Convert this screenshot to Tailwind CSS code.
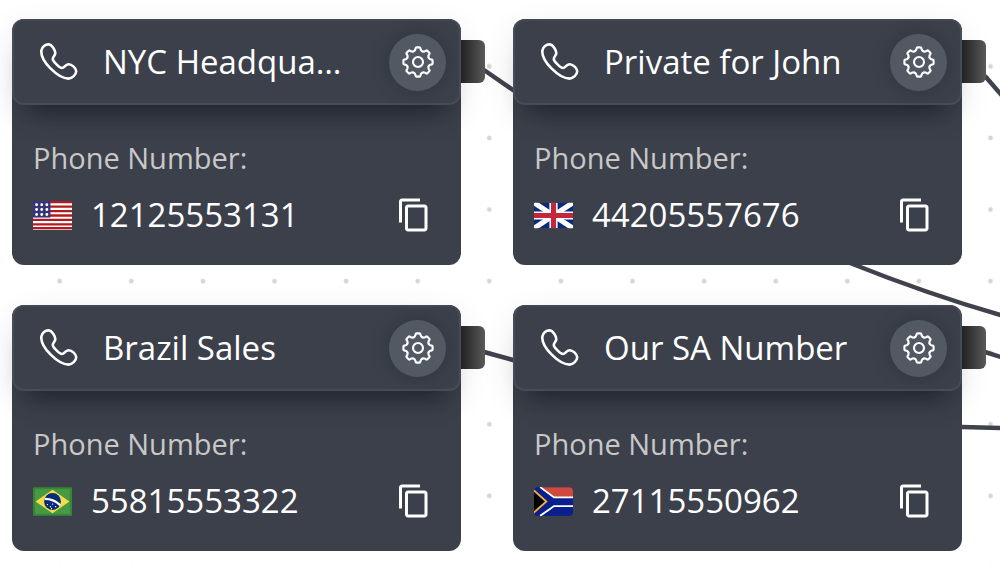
<!DOCTYPE html>
<html lang="en">
<head>
    <meta charset="UTF-8">
    <meta name="viewport" content="width=device-width, initial-scale=1.0">
    <title>Call Flow - Phone Numbers</title>
    <script src="https://cdn.jsdelivr.net/npm/@tailwindcss/browser@4"></script>
</head>
<body class="bg-white">
    <!-- Shared icons -->
    <svg class="hidden">
        <symbol id="icon-phone" viewBox="0 0 38 38">
            <path fill="none" stroke="currentColor" stroke-width="2.6" stroke-linejoin="round" d="M1.4 7.5C1.8 4 5.5 1.2 8.8 1.4C12 1.6 15.2 7 15.3 10C15.4 13 12.6 13.6 12.8 16.2C13 18.5 19.5 24.8 22 25C24.5 25 25 21.6 28.5 21.2C31.5 21 36 25 36.2 28C36.4 31.5 32 35.5 28.5 35.6C18 35.5 0 18 1.4 7.5Z" />
        </symbol>
        <symbol id="icon-gear" viewBox="-16 -16 32 32">
            <g fill="none" stroke="currentColor" stroke-width="2.1" stroke-linecap="round" stroke-linejoin="round">
                <path id="tooth" d="M-4.4 -10.6Q-3 -11.2 -2.7 -12.4L-2.4 -13.8Q-2.2 -14.6 -1.4 -14.6H1.4Q2.2 -14.6 2.4 -13.8L2.7 -12.4Q3 -11.2 4.4 -10.6" />
                <use href="#tooth" transform="rotate(45)" />
                <use href="#tooth" transform="rotate(90)" />
                <use href="#tooth" transform="rotate(135)" />
                <use href="#tooth" transform="rotate(180)" />
                <use href="#tooth" transform="rotate(225)" />
                <use href="#tooth" transform="rotate(270)" />
                <use href="#tooth" transform="rotate(315)" />
                <circle r="5" />
            </g>
        </symbol>
        <symbol id="icon-copy" viewBox="0 0 24 24">
            <path fill="currentColor" d="M16 1H4c-1.100 0-2 .9-2 2v14h2V3h12V1zm3 4H8c-1.100 0-2 .9-2 2v14c0 1.100.9 2 2 2h11c1.100 0 2-.9 2-2V7c0-1.100-.9-2-2-2zm0 16H8V7h11v14z" />
        </symbol>
    </svg>

    <main class="relative min-h-screen overflow-hidden font-['Open_Sans','Noto_Sans',sans-serif] text-white">
        <!-- Dotted canvas and wires -->
        <svg class="absolute inset-0 h-full w-full" aria-hidden="true">
            <defs>
                <pattern id="dots" x="23.9" y="30.6" width="71.6" height="71.6" patternUnits="userSpaceOnUse">
                    <circle cx="35.8" cy="35.8" r="2.400" fill="#d6d6d6" />
                </pattern>
            </defs>
            <rect width="100%" height="100%" fill="url(#dots)" />
            <g fill="none" stroke="#40434d" stroke-width="4.500">
                <path d="M484 70L513 90C620 165 740 220 850 263Q930 295 1004 316" />
                <path d="M985 76L1004 98" />
                <path d="M484 352L513 360C650 398 800 426 962 427L1004 428" />
                <path d="M985 352L1004 358" />
            </g>
        </svg>

        <!-- Number nodes -->
        <div class="relative grid grid-cols-2 gap-x-[52px] gap-y-10 pt-[19px] pr-[38px] pl-3">
            <section class="relative rounded-xl bg-[#3b404b]">
                <header class="flex h-[86px] items-center rounded-xl border-2 border-[#464c58] border-t-[#414753] bg-[#3b404b] pr-[13px] pl-[26px] shadow-[0_22px_24px_-16px_rgba(0,0,0,0.4),0_10px_36px_-4px_rgba(0,0,0,0.12)]">
                    <svg class="size-[38px] shrink-0"><use href="#icon-phone" /></svg>
                    <h2 class="mr-9 ml-[25px] flex-1 truncate text-[33px] leading-12">NYC Headquarters</h2>
                    <button type="button" aria-label="Settings" class="flex size-[57px] shrink-0 items-center justify-center rounded-full bg-[#535963] shadow-[0_0_20px_rgba(0,0,0,0.2)]">
                        <svg class="size-8"><use href="#icon-gear" /></svg>
                    </button>
                </header>
                <div class="absolute top-[21px] left-full h-[43px] w-6 rounded-r-md bg-linear-to-r from-[#222222] to-[#5a5a5a]"></div>
                <div class="relative px-[21px] pt-[33px] pb-[30px]">
                    <p class="text-[29px] leading-10 text-[#c8c8c8]">Phone Number:</p>
                    <div class="mt-[17px] flex h-10 items-center">
                        <svg class="h-[29px] w-[39px]" viewBox="0 0 38 28" role="img" aria-label="United States">
                            <rect width="38" height="28" fill="#ffffff" />
                            <path stroke="#b31b1f" stroke-width="2.200" d="M0 1H38M0 5.400H38M0 9.700H38M0 14H38M0 18.300H38M0 22.600H38M0 26.400H38" />
                            <rect width="17" height="16" fill="#35357a" />
                            <path stroke="#ffffff" stroke-width="2.800" stroke-linecap="round" stroke-dasharray="0 5" d="M3.500 3.500H14M3.500 8.200H14M3.500 13H14" />
                        </svg>
                        <span class="ml-[19px] flex-1 text-[33px] leading-10">12125553131</span>
                        <button type="button" aria-label="Copy number" class="mr-2"><svg class="size-9"><use href="#icon-copy" /></svg></button>
                    </div>
                </div>
            </section>

            <section class="relative rounded-xl bg-[#3b404b]">
                <header class="flex h-[86px] items-center rounded-xl border-2 border-[#464c58] border-t-[#414753] bg-[#3b404b] pr-[13px] pl-[26px] shadow-[0_22px_24px_-16px_rgba(0,0,0,0.4),0_10px_36px_-4px_rgba(0,0,0,0.12)]">
                    <svg class="size-[38px] shrink-0"><use href="#icon-phone" /></svg>
                    <h2 class="mr-9 ml-[25px] flex-1 truncate text-[33px] leading-12">Private for John</h2>
                    <button type="button" aria-label="Settings" class="flex size-[57px] shrink-0 items-center justify-center rounded-full bg-[#535963] shadow-[0_0_20px_rgba(0,0,0,0.2)]">
                        <svg class="size-8"><use href="#icon-gear" /></svg>
                    </button>
                </header>
                <div class="absolute top-[21px] left-full h-[43px] w-6 rounded-r-md bg-linear-to-r from-[#222222] to-[#5a5a5a]"></div>
                <div class="relative px-[21px] pt-[33px] pb-[30px]">
                    <p class="text-[29px] leading-10 text-[#c8c8c8]">Phone Number:</p>
                    <div class="mt-[17px] flex h-10 items-center">
                        <svg class="h-[29px] w-[39px]" viewBox="0 0 38 28" role="img" aria-label="United Kingdom">
                            <svg y="1.500" width="38" height="25" viewBox="0 0 38 25">
                                <rect width="38" height="25" fill="#0a2a7c" />
                                <path stroke="#ffffff" stroke-width="5" d="M0 0L38 25M38 0L0 25" />
                                <path stroke="#ffffff" stroke-width="8" d="M19 0V25M0 12.500H38" />
                                <path stroke="#c4273b" stroke-width="5" d="M19 0V25M0 12.500H38" />
                            </svg>
                        </svg>
                        <span class="ml-[19px] flex-1 text-[33px] leading-10">44205557676</span>
                        <button type="button" aria-label="Copy number" class="mr-2"><svg class="size-9"><use href="#icon-copy" /></svg></button>
                    </div>
                </div>
            </section>

            <section class="relative rounded-xl bg-[#3b404b]">
                <header class="flex h-[86px] items-center rounded-xl border-2 border-[#464c58] border-t-[#414753] bg-[#3b404b] pr-[13px] pl-[26px] shadow-[0_22px_24px_-16px_rgba(0,0,0,0.4),0_10px_36px_-4px_rgba(0,0,0,0.12)]">
                    <svg class="size-[38px] shrink-0"><use href="#icon-phone" /></svg>
                    <h2 class="mr-9 ml-[25px] flex-1 truncate text-[33px] leading-12">Brazil Sales</h2>
                    <button type="button" aria-label="Settings" class="flex size-[57px] shrink-0 items-center justify-center rounded-full bg-[#535963] shadow-[0_0_20px_rgba(0,0,0,0.2)]">
                        <svg class="size-8"><use href="#icon-gear" /></svg>
                    </button>
                </header>
                <div class="absolute top-[21px] left-full h-[43px] w-6 rounded-r-md bg-linear-to-r from-[#222222] to-[#5a5a5a]"></div>
                <div class="relative px-[21px] pt-[33px] pb-[30px]">
                    <p class="text-[29px] leading-10 text-[#c8c8c8]">Phone Number:</p>
                    <div class="mt-[17px] flex h-10 items-center">
                        <svg class="h-[29px] w-[39px]" viewBox="0 0 38 28" role="img" aria-label="Brazil">
                            <rect width="38" height="28" rx="1" fill="#3a8538" />
                            <rect x="2" y="2" width="34" height="24" fill="#459a43" />
                            <path fill="#f7dc4a" d="M19 2.500L35.500 14L19 25.500L2.500 14Z" />
                            <circle cx="19" cy="14" r="8.200" fill="#0a2a7c" />
                            <path fill="none" stroke="#ffffff" stroke-width="2.200" d="M11.500 11.500Q20 11.500 26.500 17.500" />
                            <path stroke="#ffffff" stroke-width="1.200" stroke-linecap="round" d="M14 17h.1M17 19h.1M19 16.500h.1M22 19h.1M18 21h.1" />
                        </svg>
                        <span class="ml-[19px] flex-1 text-[33px] leading-10">55815553322</span>
                        <button type="button" aria-label="Copy number" class="mr-2"><svg class="size-9"><use href="#icon-copy" /></svg></button>
                    </div>
                </div>
            </section>

            <section class="relative rounded-xl bg-[#3b404b]">
                <header class="flex h-[86px] items-center rounded-xl border-2 border-[#464c58] border-t-[#414753] bg-[#3b404b] pr-[13px] pl-[26px] shadow-[0_22px_24px_-16px_rgba(0,0,0,0.4),0_10px_36px_-4px_rgba(0,0,0,0.12)]">
                    <svg class="size-[38px] shrink-0"><use href="#icon-phone" /></svg>
                    <h2 class="mr-9 ml-[25px] flex-1 truncate text-[33px] leading-12">Our SA Number</h2>
                    <button type="button" aria-label="Settings" class="flex size-[57px] shrink-0 items-center justify-center rounded-full bg-[#535963] shadow-[0_0_20px_rgba(0,0,0,0.2)]">
                        <svg class="size-8"><use href="#icon-gear" /></svg>
                    </button>
                </header>
                <div class="absolute top-[21px] left-full h-[43px] w-6 rounded-r-md bg-linear-to-r from-[#222222] to-[#5a5a5a]"></div>
                <div class="relative px-[21px] pt-[33px] pb-[30px]">
                    <p class="text-[29px] leading-10 text-[#c8c8c8]">Phone Number:</p>
                    <div class="mt-[17px] flex h-10 items-center">
                        <svg class="h-[29px] w-[39px] rounded-sm" viewBox="0 0 38 28" role="img" aria-label="South Africa">
                            <rect width="38" height="28" fill="#0a1f8c" />
                            <path fill="#cf4a3e" d="M6 0H38V10H19Z" />
                            <path fill="none" stroke="#ffffff" stroke-width="1.800" d="M6 0L19.500 10H38M6 28L19.500 18.500H38" />
                            <path fill="#000000" stroke="#f0b040" stroke-width="1.800" d="M-1 2.500L12 14L-1 25.500Z" />
                        </svg>
                        <span class="ml-[19px] flex-1 text-[33px] leading-10">27115550962</span>
                        <button type="button" aria-label="Copy number" class="mr-2"><svg class="size-9"><use href="#icon-copy" /></svg></button>
                    </div>
                </div>
            </section>
        </div>
    </main>
</body>
</html>
